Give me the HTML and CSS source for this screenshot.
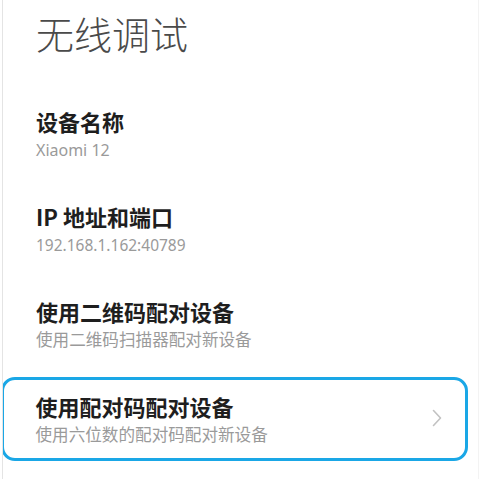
FILE: index.html
```
<!DOCTYPE html>
<html lang="zh-CN">
<head>
    <meta charset="UTF-8">
    <title>无线调试</title>
    <link rel="stylesheet" href="styles.css">
</head>
<body>
<div class="screen">
    <h1 class="title">无线调试</h1>
    <div class="list">
        <div class="item">
            <div class="item-text">
                <div class="item-name">设备名称</div>
                <div class="item-desc">Xiaomi 12</div>
            </div>
        </div>
        <div class="item">
            <div class="item-text">
                <div class="item-name">IP 地址和端口</div>
                <div class="item-desc digits">192.168.1.162:40789</div>
            </div>
        </div>
        <div class="item">
            <div class="item-text">
                <div class="item-name">使用二维码配对设备</div>
                <div class="item-desc cn">使用二维码扫描器配对新设备</div>
            </div>
        </div>
        <div class="item item-active">
            <div class="item-text">
                <div class="item-name">使用配对码配对设备</div>
                <div class="item-desc cn">使用六位数的配对码配对新设备</div>
            </div>
            <svg class="arrow" width="10" height="18" viewBox="0 0 10 18">
                <path d="M1.5 1.5 L8.5 9 L1.5 16.5" fill="none" stroke="#c2c2c2" stroke-width="1.6" stroke-linecap="round" stroke-linejoin="round"/>
            </svg>
        </div>
    </div>
</div>
</body>
</html>
```

FILE: styles.css
```
*{
    margin: 0;
    padding: 0;
    box-sizing: border-box;
}
body{
    background: #fff;
    font-family: "Noto Sans CJK SC", "Noto Sans", sans-serif;
}
.screen{
    margin-left: 2px;
    width: 477px;
    min-height: 100vh;
    border-left: 1px solid #e4e4e4;
    border-right: 1px solid #f3f3f3;
    padding-left: 33px;
    overflow: hidden;
}
.title{
    margin-top: 8px;
    font-size: 38px;
    line-height: 50px;
    font-weight: 300;
    color: #4a4a4a;
}
.list{
    margin-top: 48px;
    padding-right: 10px;
    display: flex;
    flex-direction: column;
    gap: 40px;
}
.item{
    display: flex;
    align-items: center;
}
.item-text{
    flex: 1;
}
.item-name{
    font-size: 22px;
    line-height: 30px;
    font-weight: 700;
    color: #1e1e1e;
}
.item-desc{
    margin-top: 3px;
    font-family: "Noto Sans", "Noto Sans CJK SC", sans-serif;
    font-size: 16px;
    line-height: 22px;
    color: #9a9a9a;
}
.item-desc.digits{
    font-size: 15.5px;
}
.item-desc.cn{
    font-size: 16.6px;
}
.item-active{
    margin-left: -35px;
    margin-top: -14px;
    padding: 10.5px 23px 12px 31.5px;
    border: 3.5px solid #1aa7e6;
    border-radius: 14px;
}
.arrow{
    display: block;
}
```
